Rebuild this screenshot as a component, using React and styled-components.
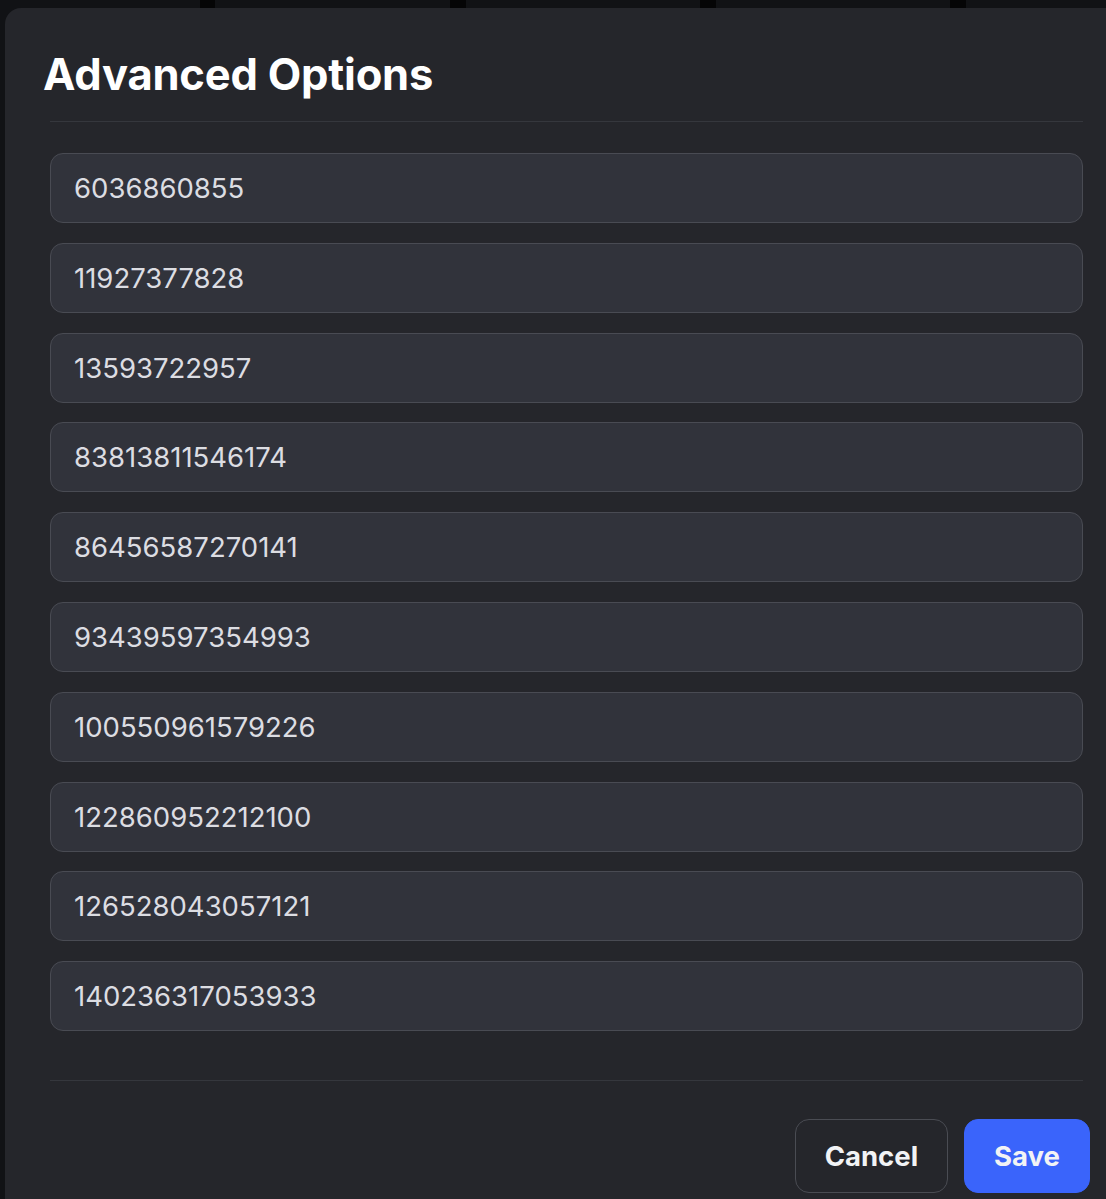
import React from 'react'
import styled, { createGlobalStyle } from 'styled-components'

const values = [
  '6036860855',
  '11927377828',
  '13593722957',
  '83813811546174',
  '86456587270141',
  '93439597354993',
  '100550961579226',
  '122860952212100',
  '126528043057121',
  '140236317053933',
]

export default () => (
  <>
    <GlobalStyle />
    <Backdrop>
      <Modal>
        <Header>
          <Title>Advanced Options</Title>
        </Header>
        <Body>
          {values.map((v) => (
            <Field key={v} defaultValue={v} />
          ))}
        </Body>
        <Footer>
          <Button>Cancel</Button>
          <Button primary>Save</Button>
        </Footer>
      </Modal>
    </Backdrop>
  </>
)

const GlobalStyle = createGlobalStyle`
  html, body {
    margin: 0;
    padding: 0;
    overflow: hidden;
    background: #0f1013;
  }
  * { box-sizing: border-box; }
`

const Backdrop = styled.div`
  width: 1106px;
  height: 1199px;
  overflow: hidden;
  padding: 8px 0 0 5px;
  background:
    linear-gradient(90deg, transparent 200px, #050506 200px, #050506 215px, transparent 215px,
      transparent 450px, #050506 450px, #050506 466px, transparent 466px,
      transparent 700px, #050506 700px, #050506 716px, transparent 716px,
      transparent 950px, #050506 950px, #050506 966px, transparent 966px) top / 100% 8px no-repeat,
    #111215;
  font-family: Inter, 'Noto Sans', sans-serif;
`

const Modal = styled.div`
  width: 1123px;
  min-height: 1300px;
  background: #25262b;
  border-radius: 16px 16px 0 0;
  display: flex;
  flex-direction: column;
`

const Header = styled.div`
  padding: 40px 38px 0;
`

const Title = styled.h2`
  margin: 0;
  font-size: 43.5px;
  line-height: 52px;
  font-weight: 700;
  color: #ffffff;
  letter-spacing: -0.2px;
`

const Body = styled.div`
  margin: 21px 45px 0;
  padding: 31px 0 49px;
  border-top: 1px solid #35373d;
  border-bottom: 1px solid #35373d;
  display: flex;
  flex-direction: column;
  gap: 19.8px;
`

const Field = styled.input`
  height: 70px;
  width: 100%;
  padding: 0 23px;
  border: 1px solid #494b53;
  border-radius: 13px;
  background: #31333b;
  color: #dcdde2;
  font-family: Inter, 'Noto Sans', sans-serif;
  font-size: 27.5px;
  outline: none;
`

const Footer = styled.div`
  display: flex;
  justify-content: flex-end;
  gap: 16px;
  padding: 38px 38px;
`

const Button = styled.button`
  height: 74px;
  padding: 0 29px;
  border-radius: 14px;
  border: 1px solid ${(p) => (p.primary ? '#3a64fb' : '#4a4c53')};
  background: ${(p) => (p.primary ? '#3a64fb' : 'transparent')};
  color: #f2f3f5;
  font-family: Inter, 'Noto Sans', sans-serif;
  font-size: 27.5px;
  font-weight: 700;
  cursor: pointer;
`
